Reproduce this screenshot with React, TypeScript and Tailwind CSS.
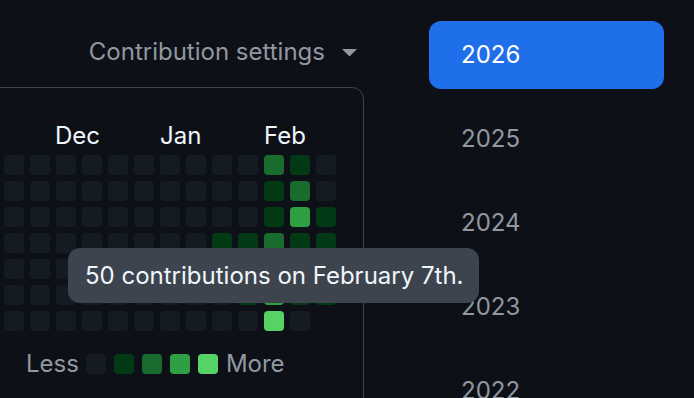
const levelColors = ['bg-[#151b23]', 'bg-[#033a16]', 'bg-[#196c2e]', 'bg-[#2ea043]', 'bg-[#56d364]']

// weeks shown left to right, 7 days each (Sun..Sat); -1 = future day, no cell
const rows: number[][] = [
  [0, 0, 0, 0, 0, 0, 0, 0, 0, 0, 2, 1, 0],
  [0, 0, 0, 0, 0, 0, 0, 0, 0, 0, 1, 2, 0],
  [0, 0, 0, 0, 0, 0, 0, 0, 0, 0, 1, 3, 1],
  [0, 0, 0, 0, 0, 0, 0, 0, 1, 1, 2, 1, 1],
  [0, 0, 0, 0, 0, 0, 0, 0, 1, 1, 2, 1, 1],
  [0, 0, 0, 0, 0, 0, 0, 0, 0, 1, 3, 1, 1],
  [0, 0, 0, 0, 0, 0, 0, 0, 0, 0, 4, 0, -1],
]

const years = ['2026', '2025', '2024', '2023', '2022']

export default function App() {
  return (
    <div className="relative h-[398px] overflow-hidden bg-[#0d1117] font-['Inter',sans-serif] flex">
      {/* Left: graph */}
      <div className="w-[364px] shrink-0 flex flex-col">
        <div className="h-[87px] shrink-0 pt-[36px] pr-[7px] flex items-start justify-end">
          <button className="h-[32px] flex items-center gap-[17px] text-[24px] leading-[32px] text-[#9198a1]">
            Contribution settings
            <svg width="15" height="8" viewBox="0 0 15 8" className="mt-[2px]">
              <path d="M0 0h15L7.5 7.5z" fill="#9198a1" />
            </svg>
          </button>
        </div>

        <div className="-ml-[40px] pl-[43px] pr-[26px] pt-[32px] h-[400px] shrink-0 border border-[#3d444d] rounded-[12px]">
          <div className="grid grid-cols-[repeat(13,20px)] gap-x-[6px] h-[32px] text-[24px] leading-[32px] text-[#f0f6fc]">
            <span className="col-start-3 col-span-4 -ml-[1px]">Dec</span>
            <span className="col-start-7 col-span-4">Jan</span>
            <span className="col-start-11 col-span-3">Feb</span>
          </div>
          <div className="mt-[3px] flex flex-col gap-[6px]">
            {rows.map((row, r) => (
              <div key={r} className="flex gap-[6px]">
                {row.map((lvl, c) =>
                  lvl < 0 ? (
                    <div key={c} className="w-[20px] h-[20px]" />
                  ) : (
                    <div key={c} className={`w-[20px] h-[20px] rounded-[4px] ${levelColors[lvl]}`} />
                  )
                )}
              </div>
            ))}
          </div>
          <div className="mt-[17px] pl-[22px] flex items-center gap-[8px] text-[24px] leading-[32px] text-[#9198a1]">
            <span className="-mr-[1px]">Less</span>
            {levelColors.map((c, i) => (
              <div key={i} className={`w-[20px] h-[20px] rounded-[4px] ${c}`} />
            ))}
            <span>More</span>
          </div>
        </div>
      </div>

      {/* Right: year list */}
      <ul className="ml-[65px] pt-[21px] w-[235px] flex flex-col gap-[16px]">
        {years.map((y, i) => (
          <li
            key={y}
            className={`h-[68px] shrink-0 flex items-center pl-[32px] rounded-[12px] text-[24px] ${
              i === 0 ? 'bg-[#1f6feb] text-white' : 'text-[#9198a1]'
            }`}
          >
            {y}
          </li>
        ))}
      </ul>

      {/* Tooltip */}
      <div className="absolute left-[68px] top-[248px] w-[411px] h-[55px] rounded-[12px] bg-[#3d444d] pl-[17px] flex items-center text-[24px] text-[#f0f6fc] whitespace-nowrap">
        50 contributions on February 7th.
      </div>
    </div>
  )
}
